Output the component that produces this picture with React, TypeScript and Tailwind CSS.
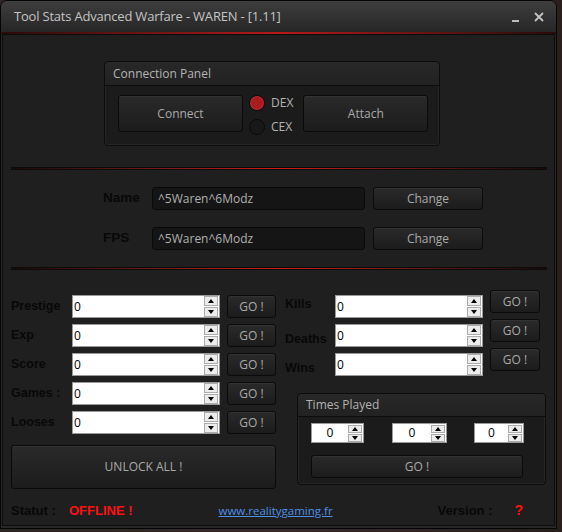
import React from "react";

const ui = { fontFamily: '"Open Sans", "Noto Sans", sans-serif' };
const bold = { fontFamily: '"Liberation Sans", Arial, sans-serif' };

const btn =
  "flex items-center justify-center rounded-[3px] border border-[#0a0a0a] bg-gradient-to-b from-[#2a2a2a] to-[#1c1c1c] text-[#a9a9a9] shadow-[inset_0_1px_0_#333333]";

function RedLine({ className = "" }: { className?: string }) {
  return (
    <div className={"h-[3px] bg-[#0b0b0b] flex items-center " + className}>
      <div className="h-[1px] w-full bg-gradient-to-r from-[#1a0a0a] via-[#d01c1c] to-[#1a0a0a]" />
    </div>
  );
}

function Spin({ small = false }: { small?: boolean }) {
  const h = small ? "h-[8px]" : "h-[10px]";
  return (
    <div className="flex flex-col gap-[1px] mr-[1px]">
      <div className={`${h} w-[14px] bg-[#ececec] border border-[#acacac] flex items-center justify-center`}>
        <div className="w-0 h-0 border-l-[3.5px] border-r-[3.5px] border-b-[4px] border-l-transparent border-r-transparent border-b-black" />
      </div>
      <div className={`${h} w-[14px] bg-[#ececec] border border-[#acacac] flex items-center justify-center`}>
        <div className="w-0 h-0 border-l-[3.5px] border-r-[3.5px] border-t-[4px] border-l-transparent border-r-transparent border-t-black" />
      </div>
    </div>
  );
}

function NumBox({ className = "" }: { className?: string }) {
  return (
    <div
      className={
        "h-[23px] w-[148px] bg-white border border-[#9a9a9a] flex items-center justify-between pl-[1px] " +
        className
      }
    >
      <span className="text-[12px] text-black leading-none" style={ui}>
        0
      </span>
      <Spin />
    </div>
  );
}

function SmallNum({ w }: { w: string }) {
  return (
    <div className={w + " h-[20px] bg-white border border-[#9a9a9a] flex items-center"}>
      <span className="flex-1 text-center text-[12px] text-black leading-none" style={ui}>
        0
      </span>
      <Spin small />
    </div>
  );
}

function Label({ children, className = "" }: { children: React.ReactNode; className?: string }) {
  return (
    <span className={"text-[12.5px] leading-[15px] font-bold text-[#080808] " + className} style={bold}>
      {children}
    </span>
  );
}

const leftRows = ["Prestige", "Exp", "Score", "Games :", "Looses"];
const rightRows = [
  { label: "Kills", lm: "mt-[7px]" },
  { label: "Deaths", lm: "mt-[13px]" },
  { label: "Wins", lm: "mt-[13px]" },
];

export default function App() {
  return (
    <div className="w-[562px] h-[532px] bg-gradient-to-r from-[#2e2422] via-[#3a2c28] to-[#2a1f1c] overflow-hidden" style={ui}>
      <div className="w-[557px] h-[529px] rounded-t-[7px] border border-[#050505] bg-[#272727] flex flex-col">
        {/* Title bar */}
        <div className="h-[31px] flex items-center pl-[13px] pr-[12px] rounded-t-[6px] bg-gradient-to-b from-[#3e3e3e] to-[#262626]">
          <span className="text-[13px] text-[#c4c4c4] tracking-[-0.2px]">Tool Stats Advanced Warfare - WAREN - [1.11]</span>
          <div className="ml-auto flex items-center gap-[15px] text-[#bdbdbd]">
            <div className="w-[7px] h-[2px] bg-[#bdbdbd] mt-[8px]" />
            <svg width="10" height="10" viewBox="0 0 10 10">
              <path d="M1 1L9 9M9 1L1 9" stroke="#c4c4c4" strokeWidth="1.8" />
            </svg>
          </div>
        </div>
        <div className="h-[2px] bg-gradient-to-r from-[#2a0a0a] via-[#b81818] to-[#2a0a0a]" />

        {/* Content */}
        <div className="flex-1 mx-[1px] mb-[2px] border border-[#0c0c0c] bg-[#1f1f1f] flex flex-col">
          {/* Connection Panel */}
          <div className="ml-[101px] mt-[26px] w-[336px] h-[85px] rounded-[4px] border border-[#0c0c0c] bg-[#1b1b1b] flex flex-col shadow-[inset_0_0_0_1px_#262626]">
            <div className="h-[24px] flex items-center pl-[8px] border-b border-[#0c0c0c] bg-gradient-to-b from-[#282828] to-[#222222] rounded-t-[4px]">
              <span className="text-[12px] text-[#b3b3b3]">Connection Panel</span>
            </div>
            <div className="flex items-start pl-[13px] pt-[9px]">
              <button className={btn + " w-[125px] h-[37px] text-[12px]"}>Connect</button>
              <div className="ml-[6px] flex flex-col gap-[6px] mt-[-1px]">
                <div className="flex items-center gap-[6px]">
                  <div className="w-[16px] h-[16px] rounded-full bg-[#a81b1f] border border-[#0a0a0a] shadow-[inset_0_0_0_1px_#c52a2e]" />
                  <span className="text-[12px] text-[#b3b3b3]">DEX</span>
                </div>
                <div className="flex items-center gap-[6px]">
                  <div className="w-[16px] h-[16px] rounded-full bg-[#181818] border border-[#0a0a0a]" />
                  <span className="text-[12px] text-[#b3b3b3]">CEX</span>
                </div>
              </div>
              <button className={btn + " ml-[10px] w-[125px] h-[37px] text-[12px]"}>Attach</button>
            </div>
          </div>

          <RedLine className="ml-[8px] mt-[21px] w-[536px]" />

          {/* Name / FPS */}
          <div className="mt-[17px] flex flex-col gap-[17px]">
            {["Name", "FPS"].map((l) => (
              <div key={l} className="flex items-center ml-[100px]">
                <span className="w-[49px] text-[13.5px] font-bold text-[#080808]" style={bold}>
                  {l}
                </span>
                <div className="w-[213px] h-[23px] rounded-[3px] border border-[#0a0a0a] bg-[#151515] flex items-center pl-[5px]">
                  <span className="text-[12px] text-[#b0b0b0]">^5Waren^6Modz</span>
                </div>
                <button className={btn + " ml-[8px] w-[110px] h-[23px] text-[12px]"}>Change</button>
              </div>
            ))}
          </div>

          <RedLine className="ml-[8px] mt-[17px] w-[536px]" />

          {/* Stats */}
          <div className="mt-[20px] flex pl-[8px]">
            <div className="w-[265px] flex flex-col">
              <div className="mt-[5px] flex flex-col gap-[6px]">
                {leftRows.map((l) => (
                  <div key={l} className="flex items-center">
                    <Label className="w-[61px]">{l}</Label>
                    <NumBox />
                    <button className={btn + " ml-[7px] w-[49px] h-[23px] text-[12px]"}>GO !</button>
                  </div>
                ))}
              </div>
              <button className={btn + " mt-[11px] w-[265px] h-[44px] text-[12px]"}>UNLOCK ALL !</button>
            </div>

            <div className="ml-[9px] w-[262px] flex flex-col">
              <div className="flex flex-col">
                {rightRows.map((r) => (
                  <div key={r.label} className="h-[29px] flex items-start">
                    <Label className={"w-[50px] " + r.lm}>{r.label}</Label>
                    <NumBox className="mt-[5px]" />
                    <button className={btn + " ml-[7px] w-[50px] h-[23px] text-[12px]"}>GO !</button>
                  </div>
                ))}
              </div>
              <div className="ml-[12px] mt-[16px] w-[249px] h-[92px] rounded-[4px] border border-[#0c0c0c] bg-[#1b1b1b] flex flex-col shadow-[inset_0_0_0_1px_#262626]">
                <div className="h-[23px] flex items-center pl-[8px] border-b border-[#0c0c0c] bg-gradient-to-b from-[#282828] to-[#222222] rounded-t-[4px]">
                  <span className="text-[12px] text-[#b3b3b3]">Times Played</span>
                </div>
                <div className="flex items-center pl-[13px] pt-[6px]">
                  <SmallNum w="w-[53px]" />
                  <div className="w-[28px]" />
                  <SmallNum w="w-[55px]" />
                  <div className="w-[27px]" />
                  <SmallNum w="w-[50px]" />
                </div>
                <button className={btn + " ml-[13px] mt-[12px] w-[212px] h-[23px] text-[12px]"}>GO !</button>
              </div>
            </div>
          </div>

          {/* Footer */}
          <div className="flex-1 flex items-center pl-[8px] pt-[7px]">
            <Label className="w-[58px] text-[13px]">Statut :</Label>
            <span className="text-[13px] font-bold text-[#ff1010]" style={bold}>
              OFFLINE !
            </span>
            <span className="ml-[86px] text-[11.5px] text-[#4d90e6] underline">www.realitygaming.fr</span>
            <Label className="ml-[105px] w-[77px] text-[13px]">Version :</Label>
            <span className="text-[14px] font-bold text-[#ff1010]" style={bold}>
              ?
            </span>
          </div>
        </div>
      </div>
    </div>
  );
}
